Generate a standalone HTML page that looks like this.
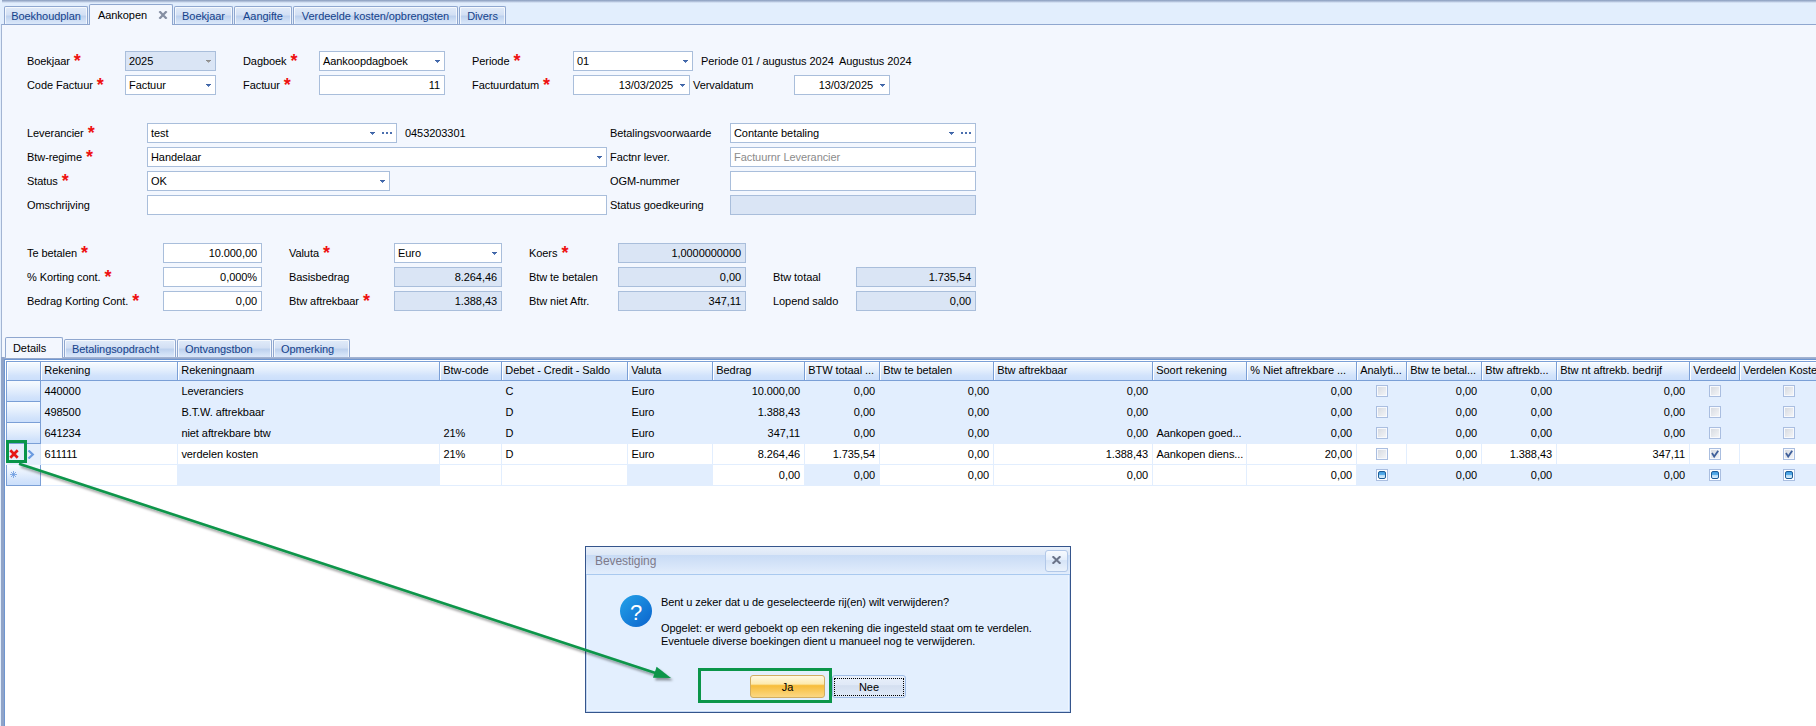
<!DOCTYPE html><html><head><meta charset="utf-8"><title>Aankopen</title><style>
*{box-sizing:border-box;margin:0;padding:0}
html,body{width:1816px;height:726px;overflow:hidden}
body{position:relative;background:#e2eefd;font-family:"Liberation Sans",sans-serif;font-size:11px;color:#000;line-height:13px;letter-spacing:-0.07px}
.a{position:absolute;white-space:nowrap}
.lbl{position:absolute;white-space:nowrap;height:13px}
.req{color:#ee1111;font-size:18px;position:absolute;top:-3px;margin-left:4px;line-height:18px;font-weight:bold;letter-spacing:0}
.fld{position:absolute;height:20px;border:1px solid #a9bedb;background:#fff;padding:3px 3px 0 3px;white-space:nowrap;overflow:hidden}
.fld.ro{background:#dae5f5}
.fld.ro .dd{filter:grayscale(1) brightness(1.45)}
.fld.r{text-align:right;padding-right:4px}
.fld.ph{color:#8b8b8b}
.dd{position:absolute;top:8px;width:5px;height:3px;background:linear-gradient(#3f64a5,#3f64a5) 0 0/5px 1px no-repeat,linear-gradient(#4a6fb0,#4a6fb0) 1px 1px/3px 1px no-repeat,linear-gradient(#5a7fbf,#5a7fbf) 2px 2px/1px 1px no-repeat}
.dots{position:absolute;top:8px;width:10px;height:2px;background:linear-gradient(90deg,#4b6fae 0 2px,transparent 2px 4px,#4b6fae 4px 6px,transparent 6px 8px,#4b6fae 8px 10px)}
.tab{position:absolute;border:1px solid #8fa7cf;border-bottom:none;border-radius:2px 2px 0 0;color:#15428b;text-align:center;background:linear-gradient(#e1ebf9 0,#d3e0f4 45%,#bdd1ee 55%,#cfdff5 80%,#dbe8fa 100%);box-shadow:inset 1px 1px 0 rgba(255,255,255,.7),inset -1px 0 0 rgba(255,255,255,.7)}
.tab.act{background:#f3f7fe;color:#000;box-shadow:none}
.hdr{position:absolute;top:361px;height:20px;border-top:1px solid #7a9fd6;border-right:1px solid #7a9fd6;border-bottom:1px solid #7a9fd6;background:linear-gradient(#f7fbff 0,#e6f0fd 40%,#d2e3fb 75%,#cbdffb 100%);padding:2px 0 0 3.3px;overflow:hidden;white-space:nowrap;box-shadow:inset 1px 1px 0 #fff}
.cell{position:absolute;height:21px;padding:4px 4px 0 3.4px;overflow:hidden;white-space:nowrap;border-right:1px solid #e2eefe;border-bottom:1px solid #e2eefe}
.cell.r{text-align:right}
.ind{position:absolute;left:6px;width:35px;height:21px;border-left:1px solid #7a9fd6;border-right:1px solid #7a9fd6;border-bottom:1px solid #7a9fd6;background:linear-gradient(#f7fbff 0,#e6f0fd 40%,#d2e3fb 80%,#cbdffb 100%)}
.cb{position:absolute;width:12px;height:12px;border:1px solid #aabee0;background:linear-gradient(135deg,#d4d8df,#f6f7f9);box-shadow:inset 0 0 0 1px #f7f9fd}
</style></head><body>
<div class="a" style="left:2px;top:0;width:1814px;height:3px;background:linear-gradient(#889bbc,#b5c4dd 55%,#e2eefd)"></div>
<div class="a" style="left:1px;top:24px;width:1830px;height:720px;background:#f3f7fe;border:1px solid #a3b5d3;border-top-color:#8fa7cf"></div>
<div class="tab" style="left:4px;top:6px;width:84px;height:18px;padding-top:3px">Boekhoudplan</div>
<div class="tab act" style="left:89px;top:4px;width:84px;height:21px;padding-top:4px;text-align:left;padding-left:8px">Aankopen<svg style="position:absolute;left:68px;top:6px" width="10" height="8" viewBox="0 0 10 8"><path d="M1.4 0.3L8.6 7.7M8.6 0.3L1.4 7.7" stroke="#858fa3" stroke-width="2.3" fill="none"/></svg></div>
<div class="tab" style="left:174px;top:6px;width:59px;height:18px;padding-top:3px">Boekjaar</div>
<div class="tab" style="left:234px;top:6px;width:58px;height:18px;padding-top:3px">Aangifte</div>
<div class="tab" style="left:293px;top:6px;width:165px;height:18px;padding-top:3px">Verdeelde kosten/opbrengsten</div>
<div class="tab" style="left:459px;top:6px;width:47px;height:18px;padding-top:3px">Divers</div>
<div class="lbl" style="left:27px;top:55px">Boekjaar<span class="req">*</span></div>
<div class="fld ro" style="left:125px;top:51px;width:91px">2025<i class="dd" style="left:80px"></i></div>
<div class="lbl" style="left:243px;top:55px">Dagboek<span class="req">*</span></div>
<div class="fld " style="left:319px;top:51px;width:126px">Aankoopdagboek<i class="dd" style="left:115px"></i></div>
<div class="lbl" style="left:472px;top:55px">Periode<span class="req">*</span></div>
<div class="fld " style="left:573px;top:51px;width:120px">01<i class="dd" style="left:109px"></i></div>
<div class="lbl" style="left:701px;top:55px">Periode 01 / augustus 2024</div>
<div class="lbl" style="left:839px;top:55px">Augustus 2024</div>
<div class="lbl" style="left:27px;top:79px">Code Factuur<span class="req">*</span></div>
<div class="fld " style="left:125px;top:75px;width:91px">Factuur<i class="dd" style="left:80px"></i></div>
<div class="lbl" style="left:243px;top:79px">Factuur<span class="req">*</span></div>
<div class="fld r" style="left:319px;top:75px;width:126px">11</div>
<div class="lbl" style="left:472px;top:79px">Factuurdatum<span class="req">*</span></div>
<div class="fld " style="left:573px;top:75px;width:117px"><span style="position:absolute;right:16px">13/03/2025</span><i class="dd" style="left:106px"></i></div>
<div class="lbl" style="left:693px;top:79px">Vervaldatum</div>
<div class="fld " style="left:794px;top:75px;width:96px"><span style="position:absolute;right:16px">13/03/2025</span><i class="dd" style="left:85px"></i></div>
<div class="lbl" style="left:27px;top:127px">Leverancier<span class="req">*</span></div>
<div class="fld " style="left:147px;top:123px;width:250px">test<i class="dd" style="left:222px"></i><i class="dots" style="left:234px"></i></div>
<div class="lbl" style="left:405px;top:127px">0453203301</div>
<div class="lbl" style="left:27px;top:151px">Btw-regime<span class="req">*</span></div>
<div class="fld " style="left:147px;top:147px;width:460px">Handelaar<i class="dd" style="left:449px"></i></div>
<div class="lbl" style="left:27px;top:175px">Status<span class="req">*</span></div>
<div class="fld " style="left:147px;top:171px;width:243px">OK<i class="dd" style="left:232px"></i></div>
<div class="lbl" style="left:27px;top:199px">Omschrijving</div>
<div class="fld " style="left:147px;top:195px;width:460px"></div>
<div class="lbl" style="left:610px;top:127px">Betalingsvoorwaarde</div>
<div class="fld " style="left:730px;top:123px;width:246px">Contante betaling<i class="dd" style="left:218px"></i><i class="dots" style="left:230px"></i></div>
<div class="lbl" style="left:610px;top:151px">Factnr lever.</div>
<div class="fld ph" style="left:730px;top:147px;width:246px">Factuurnr Leverancier</div>
<div class="lbl" style="left:610px;top:175px">OGM-nummer</div>
<div class="fld " style="left:730px;top:171px;width:246px"></div>
<div class="lbl" style="left:610px;top:199px">Status goedkeuring</div>
<div class="fld ro" style="left:730px;top:195px;width:246px"></div>
<div class="lbl" style="left:27px;top:247px">Te betalen<span class="req">*</span></div>
<div class="fld r" style="left:163px;top:243px;width:99px">10.000,00</div>
<div class="lbl" style="left:27px;top:271px">% Korting cont.<span class="req">*</span></div>
<div class="fld r" style="left:163px;top:267px;width:99px">0,000%</div>
<div class="lbl" style="left:27px;top:295px">Bedrag Korting Cont.<span class="req">*</span></div>
<div class="fld r" style="left:163px;top:291px;width:99px">0,00</div>
<div class="lbl" style="left:289px;top:247px">Valuta<span class="req">*</span></div>
<div class="fld " style="left:394px;top:243px;width:108px">Euro<i class="dd" style="left:97px"></i></div>
<div class="lbl" style="left:289px;top:271px">Basisbedrag</div>
<div class="fld ro r" style="left:394px;top:267px;width:108px">8.264,46</div>
<div class="lbl" style="left:289px;top:295px">Btw aftrekbaar<span class="req">*</span></div>
<div class="fld ro r" style="left:394px;top:291px;width:108px">1.388,43</div>
<div class="lbl" style="left:529px;top:247px">Koers<span class="req">*</span></div>
<div class="fld ro r" style="left:618px;top:243px;width:128px">1,0000000000</div>
<div class="lbl" style="left:529px;top:271px">Btw te betalen</div>
<div class="fld ro r" style="left:618px;top:267px;width:128px">0,00</div>
<div class="lbl" style="left:529px;top:295px">Btw niet Aftr.</div>
<div class="fld ro r" style="left:618px;top:291px;width:128px">347,11</div>
<div class="lbl" style="left:773px;top:271px">Btw totaal</div>
<div class="fld ro r" style="left:856px;top:267px;width:120px">1.735,54</div>
<div class="lbl" style="left:773px;top:295px">Lopend saldo</div>
<div class="fld ro r" style="left:856px;top:291px;width:120px">0,00</div>
<div class="tab act" style="left:5px;top:337px;width:58px;height:21px;padding:4px 0 0 7px;text-align:left">Details</div>
<div class="tab" style="left:64px;top:339px;width:112px;height:18px;padding:3px 0 0 7px;text-align:left">Betalingsopdracht</div>
<div class="tab" style="left:177px;top:339px;width:95px;height:18px;padding:3px 0 0 7px;text-align:left">Ontvangstbon</div>
<div class="tab" style="left:273px;top:339px;width:77px;height:18px;padding:3px 0 0 7px;text-align:left">Opmerking</div>
<div class="a" style="left:5px;top:360px;width:1830px;height:380px;background:#fff"></div>
<div class="a" style="left:1px;top:357px;width:1830px;height:2px;background:linear-gradient(#a9b9d6,#8fa3c8)"></div>
<div class="a" style="left:1px;top:357px;width:3px;height:380px;background:#90a4c8"></div>
<div class="a" style="left:4px;top:359px;width:1830px;height:1px;background:#6e96d1"></div>
<div class="a" style="left:4px;top:359px;width:1px;height:380px;background:#6e96d1"></div>
<div class="a" style="left:6px;top:357px;width:56px;height:1px;background:#f3f7fe"></div>
<div class="hdr" style="left:6px;width:35px;border-left:1px solid #7a9fd6"></div>
<div class="hdr" style="left:41px;width:137px">Rekening</div>
<div class="hdr" style="left:178px;width:262px">Rekeningnaam</div>
<div class="hdr" style="left:440px;width:62px">Btw-code</div>
<div class="hdr" style="left:502px;width:126px">Debet - Credit - Saldo</div>
<div class="hdr" style="left:628px;width:85px">Valuta</div>
<div class="hdr" style="left:713px;width:92px">Bedrag</div>
<div class="hdr" style="left:805px;width:75px">BTW totaal ...</div>
<div class="hdr" style="left:880px;width:114px">Btw te betalen</div>
<div class="hdr" style="left:994px;width:159px">Btw aftrekbaar</div>
<div class="hdr" style="left:1153px;width:94px">Soort rekening</div>
<div class="hdr" style="left:1247px;width:110px">% Niet aftrekbare ...</div>
<div class="hdr" style="left:1357px;width:50px">Analyti...</div>
<div class="hdr" style="left:1407px;width:75px">Btw te betal...</div>
<div class="hdr" style="left:1482px;width:75px">Btw aftrekb...</div>
<div class="hdr" style="left:1557px;width:133px">Btw nt aftrekb. bedrijf</div>
<div class="hdr" style="left:1690px;width:50px">Verdeeld</div>
<div class="hdr" style="left:1740px;width:100px">Verdelen Kosten</div>
<div class="ind" style="top:381px"></div>
<div class="cell" style="left:41px;top:381px;width:137px;background:#e2eefe">440000</div>
<div class="cell" style="left:178px;top:381px;width:262px;background:#e2eefe">Leveranciers</div>
<div class="cell" style="left:440px;top:381px;width:62px;background:#e2eefe"></div>
<div class="cell" style="left:502px;top:381px;width:126px;background:#e2eefe">C</div>
<div class="cell" style="left:628px;top:381px;width:85px;background:#e2eefe">Euro</div>
<div class="cell r" style="left:713px;top:381px;width:92px;background:#e2eefe">10.000,00</div>
<div class="cell r" style="left:805px;top:381px;width:75px;background:#e2eefe">0,00</div>
<div class="cell r" style="left:880px;top:381px;width:114px;background:#e2eefe">0,00</div>
<div class="cell r" style="left:994px;top:381px;width:159px;background:#e2eefe">0,00</div>
<div class="cell" style="left:1153px;top:381px;width:94px;background:#e2eefe"></div>
<div class="cell r" style="left:1247px;top:381px;width:110px;background:#e2eefe">0,00</div>
<div class="cell" style="left:1357px;top:381px;width:50px;background:#e2eefe;padding:0"><div class="cb" style="left:19px;top:4px"></div></div>
<div class="cell r" style="left:1407px;top:381px;width:75px;background:#e2eefe">0,00</div>
<div class="cell r" style="left:1482px;top:381px;width:75px;background:#e2eefe">0,00</div>
<div class="cell r" style="left:1557px;top:381px;width:133px;background:#e2eefe">0,00</div>
<div class="cell" style="left:1690px;top:381px;width:50px;background:#e2eefe;padding:0"><div class="cb" style="left:19px;top:4px"></div></div>
<div class="cell" style="left:1740px;top:381px;width:100px;background:#e2eefe;padding:0"><div class="cb" style="left:43px;top:4px"></div></div>
<div class="ind" style="top:402px"></div>
<div class="cell" style="left:41px;top:402px;width:137px;background:#e2eefe">498500</div>
<div class="cell" style="left:178px;top:402px;width:262px;background:#e2eefe">B.T.W. aftrekbaar</div>
<div class="cell" style="left:440px;top:402px;width:62px;background:#e2eefe"></div>
<div class="cell" style="left:502px;top:402px;width:126px;background:#e2eefe">D</div>
<div class="cell" style="left:628px;top:402px;width:85px;background:#e2eefe">Euro</div>
<div class="cell r" style="left:713px;top:402px;width:92px;background:#e2eefe">1.388,43</div>
<div class="cell r" style="left:805px;top:402px;width:75px;background:#e2eefe">0,00</div>
<div class="cell r" style="left:880px;top:402px;width:114px;background:#e2eefe">0,00</div>
<div class="cell r" style="left:994px;top:402px;width:159px;background:#e2eefe">0,00</div>
<div class="cell" style="left:1153px;top:402px;width:94px;background:#e2eefe"></div>
<div class="cell r" style="left:1247px;top:402px;width:110px;background:#e2eefe">0,00</div>
<div class="cell" style="left:1357px;top:402px;width:50px;background:#e2eefe;padding:0"><div class="cb" style="left:19px;top:4px"></div></div>
<div class="cell r" style="left:1407px;top:402px;width:75px;background:#e2eefe">0,00</div>
<div class="cell r" style="left:1482px;top:402px;width:75px;background:#e2eefe">0,00</div>
<div class="cell r" style="left:1557px;top:402px;width:133px;background:#e2eefe">0,00</div>
<div class="cell" style="left:1690px;top:402px;width:50px;background:#e2eefe;padding:0"><div class="cb" style="left:19px;top:4px"></div></div>
<div class="cell" style="left:1740px;top:402px;width:100px;background:#e2eefe;padding:0"><div class="cb" style="left:43px;top:4px"></div></div>
<div class="ind" style="top:423px"></div>
<div class="cell" style="left:41px;top:423px;width:137px;background:#e2eefe">641234</div>
<div class="cell" style="left:178px;top:423px;width:262px;background:#e2eefe">niet aftrekbare btw</div>
<div class="cell" style="left:440px;top:423px;width:62px;background:#e2eefe">21%</div>
<div class="cell" style="left:502px;top:423px;width:126px;background:#e2eefe">D</div>
<div class="cell" style="left:628px;top:423px;width:85px;background:#e2eefe">Euro</div>
<div class="cell r" style="left:713px;top:423px;width:92px;background:#e2eefe">347,11</div>
<div class="cell r" style="left:805px;top:423px;width:75px;background:#e2eefe">0,00</div>
<div class="cell r" style="left:880px;top:423px;width:114px;background:#e2eefe">0,00</div>
<div class="cell r" style="left:994px;top:423px;width:159px;background:#e2eefe">0,00</div>
<div class="cell" style="left:1153px;top:423px;width:94px;background:#e2eefe">Aankopen goed...</div>
<div class="cell r" style="left:1247px;top:423px;width:110px;background:#e2eefe">0,00</div>
<div class="cell" style="left:1357px;top:423px;width:50px;background:#e2eefe;padding:0"><div class="cb" style="left:19px;top:4px"></div></div>
<div class="cell r" style="left:1407px;top:423px;width:75px;background:#e2eefe">0,00</div>
<div class="cell r" style="left:1482px;top:423px;width:75px;background:#e2eefe">0,00</div>
<div class="cell r" style="left:1557px;top:423px;width:133px;background:#e2eefe">0,00</div>
<div class="cell" style="left:1690px;top:423px;width:50px;background:#e2eefe;padding:0"><div class="cb" style="left:19px;top:4px"></div></div>
<div class="cell" style="left:1740px;top:423px;width:100px;background:#e2eefe;padding:0"><div class="cb" style="left:43px;top:4px"></div></div>
<div class="ind" style="top:444px;background:#e4eefc;border-color:#e4eefc #d4e2f6 #e4eefc #e4eefc"></div>
<div class="cell" style="left:41px;top:444px;width:137px;background:#fff">611111</div>
<div class="cell" style="left:178px;top:444px;width:262px;background:#fff">verdelen kosten</div>
<div class="cell" style="left:440px;top:444px;width:62px;background:#fff">21%</div>
<div class="cell" style="left:502px;top:444px;width:126px;background:#fff">D</div>
<div class="cell" style="left:628px;top:444px;width:85px;background:#fff">Euro</div>
<div class="cell r" style="left:713px;top:444px;width:92px;background:#fff">8.264,46</div>
<div class="cell r" style="left:805px;top:444px;width:75px;background:#fff">1.735,54</div>
<div class="cell r" style="left:880px;top:444px;width:114px;background:#fff">0,00</div>
<div class="cell r" style="left:994px;top:444px;width:159px;background:#fff">1.388,43</div>
<div class="cell" style="left:1153px;top:444px;width:94px;background:#fff">Aankopen diens...</div>
<div class="cell r" style="left:1247px;top:444px;width:110px;background:#fff">20,00</div>
<div class="cell" style="left:1357px;top:444px;width:50px;background:#fff;padding:0"><div class="cb" style="left:19px;top:4px"></div></div>
<div class="cell r" style="left:1407px;top:444px;width:75px;background:#fff">0,00</div>
<div class="cell r" style="left:1482px;top:444px;width:75px;background:#fff">1.388,43</div>
<div class="cell r" style="left:1557px;top:444px;width:133px;background:#fff">347,11</div>
<div class="cell" style="left:1690px;top:444px;width:50px;background:#fff;padding:0"><div class="cb" style="left:19px;top:4px"><svg width="10" height="10" viewBox="0 0 10 10" style="position:absolute;left:0;top:0"><path d="M2 4L4.2 7.6L8.2 1.8" stroke="#3f5f9a" stroke-width="1.8" fill="none"/></svg></div></div>
<div class="cell" style="left:1740px;top:444px;width:100px;background:#fff;padding:0"><div class="cb" style="left:43px;top:4px"><svg width="10" height="10" viewBox="0 0 10 10" style="position:absolute;left:0;top:0"><path d="M2 4L4.2 7.6L8.2 1.8" stroke="#3f5f9a" stroke-width="1.8" fill="none"/></svg></div></div>
<div class="ind" style="top:465px"></div>
<div class="cell" style="left:41px;top:465px;width:137px;background:#fff"></div>
<div class="cell" style="left:178px;top:465px;width:262px;background:#e2eefe"></div>
<div class="cell" style="left:440px;top:465px;width:62px;background:#fff"></div>
<div class="cell" style="left:502px;top:465px;width:126px;background:#fff"></div>
<div class="cell" style="left:628px;top:465px;width:85px;background:#e2eefe"></div>
<div class="cell r" style="left:713px;top:465px;width:92px;background:#fff">0,00</div>
<div class="cell r" style="left:805px;top:465px;width:75px;background:#e2eefe">0,00</div>
<div class="cell r" style="left:880px;top:465px;width:114px;background:#fff">0,00</div>
<div class="cell r" style="left:994px;top:465px;width:159px;background:#fff">0,00</div>
<div class="cell" style="left:1153px;top:465px;width:94px;background:#fff"></div>
<div class="cell r" style="left:1247px;top:465px;width:110px;background:#fff">0,00</div>
<div class="cell" style="left:1357px;top:465px;width:50px;background:#e2eefe;padding:0"><div class="cb" style="left:19px;top:4px;background:#fff;box-shadow:none"><div class="a" style="left:1px;top:1px;width:8px;height:8px;border:1px solid #1d5c96;border-radius:2px;background:linear-gradient(#3f9be0 0,#5cb0ea 45%,#b5dcf7 55%,#d8eefc 100%)"></div></div></div>
<div class="cell r" style="left:1407px;top:465px;width:75px;background:#e2eefe">0,00</div>
<div class="cell r" style="left:1482px;top:465px;width:75px;background:#e2eefe">0,00</div>
<div class="cell r" style="left:1557px;top:465px;width:133px;background:#e2eefe">0,00</div>
<div class="cell" style="left:1690px;top:465px;width:50px;background:#e2eefe;padding:0"><div class="cb" style="left:19px;top:4px;background:#fff;box-shadow:none"><div class="a" style="left:1px;top:1px;width:8px;height:8px;border:1px solid #1d5c96;border-radius:2px;background:linear-gradient(#3f9be0 0,#5cb0ea 45%,#b5dcf7 55%,#d8eefc 100%)"></div></div></div>
<div class="cell" style="left:1740px;top:465px;width:100px;background:#e2eefe;padding:0"><div class="cb" style="left:43px;top:4px;background:#fff;box-shadow:none"><div class="a" style="left:1px;top:1px;width:8px;height:8px;border:1px solid #1d5c96;border-radius:2px;background:linear-gradient(#3f9be0 0,#5cb0ea 45%,#b5dcf7 55%,#d8eefc 100%)"></div></div></div>
<svg class="a" style="left:9px;top:449px" width="10" height="10" viewBox="0 0 10 10"><path d="M1.3 1.3L8.7 8.7M8.7 1.3L1.3 8.7" stroke="#e61616" stroke-width="2.7" fill="none"/></svg>
<svg class="a" style="left:27px;top:450px" width="8" height="9" viewBox="0 0 8 9"><path d="M1.5 0.5L5.8 4.5L1.5 8.5" stroke="#6b9be0" stroke-width="2.2" fill="none"/></svg>
<svg class="a" style="left:10px;top:471px" width="7" height="7" viewBox="0 0 7 7"><path d="M3.5 0v7M0 3.5h7M1 1l5 5M6 1l-5 5" stroke="#6b9be0" stroke-width="0.8" fill="none"/></svg>
<div class="a" style="left:585px;top:546px;width:486px;height:167px;border:1px solid #35558c;background:#e3effe;box-shadow:inset 0 0 0 1px #c3d8f4,inset 0 0 0 2px #eef5fe"></div>
<div class="a" style="left:586px;top:547px;width:484px;height:28px;background:linear-gradient(#e9f0fa 0,#dde8f7 28%,#c8dbf5 30%,#e2edfc 100%);border-bottom:1px solid #a9c9ef"></div>
<div class="a" style="left:595px;top:555px;color:#7d7a8a;font-size:12px">Bevestiging</div>
<div class="a" style="left:1045px;top:550px;width:23px;height:22px;border:1px solid #b2c8e8;border-radius:3px;background:linear-gradient(#f7fafe 0,#e4eefb 44%,#d6e4f7 48%,#eaf2fc 100%)"><svg style="position:absolute;left:5px;top:5px" width="11" height="8" viewBox="0 0 11 8"><path d="M1.6 0.3L9.4 7.7M9.4 0.3L1.6 7.7" stroke="#6b7489" stroke-width="2.1" fill="none"/></svg></div>
<div class="a" style="left:620px;top:595px;width:32px;height:32px;border-radius:16px;background:linear-gradient(135deg,#219ce6 10%,#0d69cf 90%);color:#fff;font-size:22px;line-height:35px;text-align:center">?</div>
<div class="a" style="left:661px;top:596px">Bent u zeker dat u de geselecteerde rij(en) wilt verwijderen?</div>
<div class="a" style="left:661px;top:622px">Opgelet: er werd geboekt op een rekening die ingesteld staat om te verdelen.</div>
<div class="a" style="left:661px;top:635px">Eventuele diverse boekingen dient u manueel nog te verwijderen.</div>
<div class="a" style="left:750px;top:675px;width:75px;height:23px;border:1px solid #d1ad62;border-radius:3px;background:linear-gradient(#fff9e4 0,#fdeaad 38%,#f7bd3a 46%,#f9c95c 70%,#fbd884 100%);text-align:center;padding-top:5px">Ja</div>
<div class="a" style="left:832px;top:675px;width:74px;height:23px;border:1px solid #9fbce6;border-radius:3px;background:linear-gradient(#e9f0fb 0,#e0e9f7 42%,#d4dff0 46%,#e0eaf8 100%);text-align:center;padding-top:5px"><div class="a" style="left:1px;top:2px;width:70px;height:18px;border:1px dotted #000"></div>Nee</div>
<svg class="a" style="left:0;top:0" width="1816" height="726"><rect x="699.5" y="669.5" width="131" height="32" fill="none" stroke="#0a9549" stroke-width="3"/></svg>
<svg class="a" style="left:0;top:0" width="1816" height="726" viewBox="0 0 1816 726"><defs><filter id="sh" x="-5%" y="-5%" width="110%" height="110%"><feDropShadow dx="2" dy="2.5" stdDeviation="1.1" flood-color="#000" flood-opacity=".4"/></filter></defs><g filter="url(#sh)"><line x1="19" y1="463.8" x2="657" y2="673.4" stroke="#0a9549" stroke-width="2.6"/><path d="M671 678L656.6 666.8L653 677.8Z" fill="#0a9549"/></g><rect x="7.5" y="441.5" width="18" height="20" fill="none" stroke="#0a9549" stroke-width="3"/></svg>
</body></html>
